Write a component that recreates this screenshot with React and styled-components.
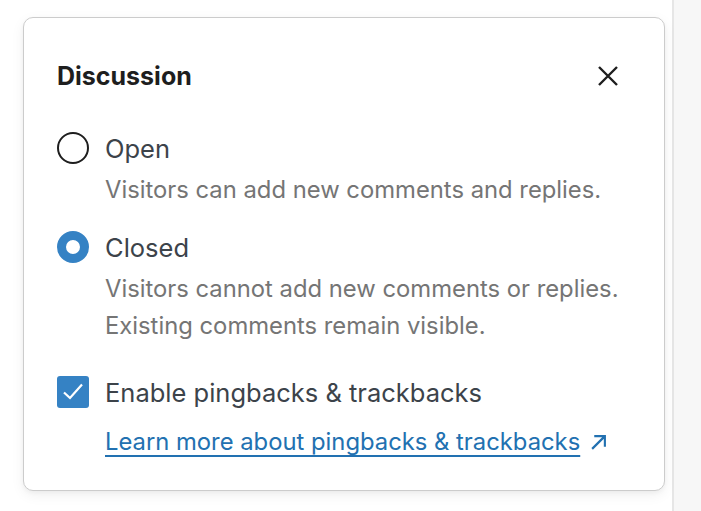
import styled, { createGlobalStyle } from "styled-components"

const GlobalStyle = createGlobalStyle`
  html, body {
    margin: 0;
    padding: 0;
    background: #ffffff;
  }
  body {
    font-family: Inter, "Noto Sans", sans-serif;
    -webkit-font-smoothing: antialiased;
  }
`

const Page = styled.div`
  display: flex;
  width: 701px;
  height: 511px;
  overflow: hidden;
`

const Main = styled.div`
  width: 674px;
  flex-shrink: 0;
  background: #ffffff;
  border-right: 2px solid #e6e6e6;
  padding: 17px 0 0 23px;
  box-sizing: border-box;
`

const Side = styled.div`
  flex-grow: 1;
  background: #f7f7f7;
`

const Card = styled.div`
  width: 642px;
  height: 474px;
  box-sizing: border-box;
  background: #fff;
  border: 1.5px solid #cccccc;
  border-radius: 10px;
  box-shadow: 0 4px 14px rgba(0, 0, 0, 0.06), 0 2px 4px rgba(0, 0, 0, 0.04);
  padding: 40px 34px 0 33px;
  display: flex;
  flex-direction: column;
`

const Header = styled.div`
  display: flex;
  justify-content: space-between;
  align-items: center;
  height: 36px;
  margin-bottom: 36px;
`

const Title = styled.h2`
  margin: 0;
  font-size: 25px;
  font-weight: 700;
  color: #1e1e1e;
`

const CloseButton = styled.button`
  border: none;
  background: none;
  padding: 0;
  width: 36px;
  height: 36px;
  display: flex;
  align-items: center;
  justify-content: center;
  margin-right: 4px;
  color: #1e1e1e;
  cursor: pointer;
`

const Option = styled.div`
  display: flex;
  flex-direction: column;
  margin-bottom: ${(p) => p.$gap || 0}px;
`

const Row = styled.label`
  display: flex;
  align-items: center;
  gap: 16px;
  height: 36px;
`

const Radio = styled.span`
  width: 32px;
  height: 32px;
  box-sizing: border-box;
  border-radius: 50%;
  flex-shrink: 0;
  border: ${(p) => (p.$checked ? "9px solid #3582c4" : "2px solid #1e1e1e")};
  background: #fff;
`

const Checkbox = styled.span`
  width: 32px;
  height: 32px;
  border-radius: 3px;
  background: #3582c4;
  flex-shrink: 0;
  display: flex;
  align-items: center;
  justify-content: center;
`

const Label = styled.span`
  font-size: 25.5px;
  color: #3c434a;
`

const Help = styled.p`
  margin: 5px 0 0 48px;
  font-size: 23.8px;
  line-height: 37px;
  color: #757575;
`

const LinkRow = styled.div`
  margin: 18px 0 0 48px;
  display: flex;
  align-items: center;
  gap: 10px;
`

const Link = styled.a`
  font-size: 23.8px;
  line-height: 28px;
  color: #2271b1;
  text-decoration: underline;
  text-underline-offset: 5px;
  text-decoration-thickness: 1.5px;
`

export default function App() {
  return (
    <>
      <GlobalStyle />
      <Page>
        <Main>
          <Card>
            <Header>
              <Title>Discussion</Title>
              <CloseButton aria-label="Close">
                <svg width="20" height="20" viewBox="0 0 20 20">
                  <path d="M1 1L19 19M19 1L1 19" stroke="currentColor" strokeWidth="2.4" fill="none" />
                </svg>
              </CloseButton>
            </Header>

            <Option $gap={21}>
              <Row>
                <Radio />
                <Label>Open</Label>
              </Row>
              <Help>Visitors can add new comments and replies.</Help>
            </Option>

            <Option $gap={30}>
              <Row>
                <Radio $checked />
                <Label>Closed</Label>
              </Row>
              <Help>
                Visitors cannot add new comments or replies.
                <br />
                Existing comments remain visible.
              </Help>
            </Option>

            <Option>
              <Row>
                <Checkbox>
                  <svg width="24" height="24" viewBox="0 0 24 24">
                    <path d="M3 12.5L9 18L21 4.5" stroke="#fff" strokeWidth="2.2" fill="none" />
                  </svg>
                </Checkbox>
                <Label>Enable pingbacks &amp; trackbacks</Label>
              </Row>
              <LinkRow>
                <Link href="#">Learn more about pingbacks &amp; trackbacks</Link>
                <svg width="17" height="17" viewBox="0 0 16 16">
                  <path d="M2 14L14 2M4 2H14V12" stroke="#2271b1" strokeWidth="2" fill="none" />
                </svg>
              </LinkRow>
            </Option>
          </Card>
        </Main>
        <Side />
      </Page>
    </>
  )
}
